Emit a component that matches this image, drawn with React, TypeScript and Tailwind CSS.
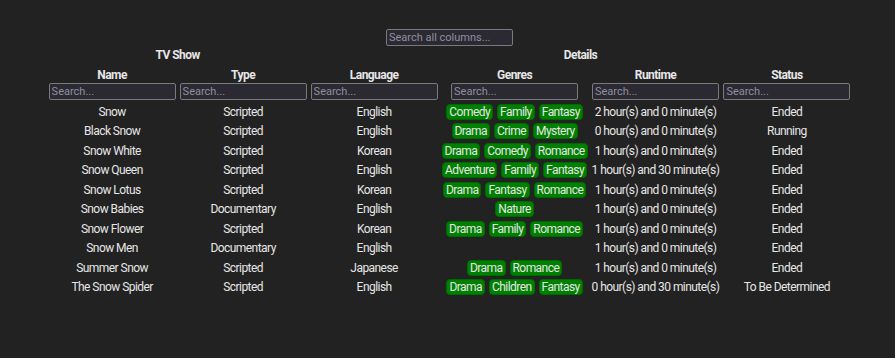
import React from "react";

type Show = {
  name: string;
  type: string;
  language: string;
  genres: string[];
  runtime: string;
  status: string;
};

const data: Show[] = [
  { name: "Snow", type: "Scripted", language: "English", genres: ["Comedy", "Family", "Fantasy"], runtime: "2 hour(s) and 0 minute(s)", status: "Ended" },
  { name: "Black Snow", type: "Scripted", language: "English", genres: ["Drama", "Crime", "Mystery"], runtime: "0 hour(s) and 0 minute(s)", status: "Running" },
  { name: "Snow White", type: "Scripted", language: "Korean", genres: ["Drama", "Comedy", "Romance"], runtime: "1 hour(s) and 0 minute(s)", status: "Ended" },
  { name: "Snow Queen", type: "Scripted", language: "English", genres: ["Adventure", "Family", "Fantasy"], runtime: "1 hour(s) and 30 minute(s)", status: "Ended" },
  { name: "Snow Lotus", type: "Scripted", language: "Korean", genres: ["Drama", "Fantasy", "Romance"], runtime: "1 hour(s) and 0 minute(s)", status: "Ended" },
  { name: "Snow Babies", type: "Documentary", language: "English", genres: ["Nature"], runtime: "1 hour(s) and 0 minute(s)", status: "Ended" },
  { name: "Snow Flower", type: "Scripted", language: "Korean", genres: ["Drama", "Family", "Romance"], runtime: "1 hour(s) and 0 minute(s)", status: "Ended" },
  { name: "Snow Men", type: "Documentary", language: "English", genres: [], runtime: "1 hour(s) and 0 minute(s)", status: "Ended" },
  { name: "Summer Snow", type: "Scripted", language: "Japanese", genres: ["Drama", "Romance"], runtime: "1 hour(s) and 0 minute(s)", status: "Ended" },
  { name: "The Snow Spider", type: "Scripted", language: "English", genres: ["Drama", "Children", "Fantasy"], runtime: "0 hour(s) and 30 minute(s)", status: "To Be Determined" },
];

const inputCls =
  "w-[127px] h-[17px] box-border border border-[#7a7a7a] rounded-[2px] bg-[#2b2a33] px-[2px] text-[11px] tracking-normal font-normal leading-none text-[#e0e0e0] placeholder:text-[#8f8f9d] outline-none";

function Filter() {
  return <input type="text" placeholder="Search..." className={inputCls} />;
}

const cols: { label: string; w: string }[] = [
  { label: "Name", w: "w-[127px]" },
  { label: "Type", w: "w-[127px]" },
  { label: "Language", w: "w-[127px]" },
  { label: "Genres", w: "w-[140px]" },
  { label: "Runtime", w: "w-[127px]" },
  { label: "Status", w: "w-[127px]" },
];

export default function App() {
  return (
    <div
      className="min-h-[358px] w-full bg-[#222222] text-[#e6e6e6] text-[12px] tracking-[-0.55px] flex flex-col items-center pt-[29px] pl-[4px]"
      style={{ fontFamily: 'Roboto, sans-serif' }}
    >
      <input type="text" placeholder="Search all columns..." className={inputCls} />
      <table className="border-separate border-spacing-[2px]">
        <thead>
          <tr>
            <th colSpan={2} className="p-px leading-[13px] font-bold text-center">TV Show</th>
            <th colSpan={4} className="p-px leading-[13px] font-bold text-center">Details</th>
          </tr>
          <tr>
            {cols.map((c) => (
              <th key={c.label} className={`p-px font-bold text-center align-top ${c.w}`}>
                <div className="leading-[16px] pt-px">{c.label}</div>
                <div className="flex justify-center"><Filter /></div>
              </th>
            ))}
          </tr>
        </thead>
        <tbody>
          {data.map((r) => (
            <tr key={r.name}>
              <td className="px-px py-0 h-[17.5px] text-center leading-[16px] whitespace-nowrap">{r.name}</td>
              <td className="px-px py-0 text-center leading-[16px] whitespace-nowrap">{r.type}</td>
              <td className="px-px py-0 text-center leading-[16px] whitespace-nowrap">{r.language}</td>
              <td className="px-px py-0 text-center leading-[16px]">
                <div className="flex justify-center gap-[4px]">
                  {r.genres.map((g) => (
                    <span
                      key={g}
                      className="inline-block h-[16px] leading-[14px] px-[2px] bg-[#008000] border border-[#006a00] rounded-[4px] text-[#e6e6e6]"
                    >
                      {g}
                    </span>
                  ))}
                </div>
              </td>
              <td className="px-px py-0 text-center leading-[16px] whitespace-nowrap">{r.runtime}</td>
              <td className="px-px py-0 text-center leading-[16px] whitespace-nowrap">{r.status}</td>
            </tr>
          ))}
        </tbody>
      </table>
    </div>
  );
}
